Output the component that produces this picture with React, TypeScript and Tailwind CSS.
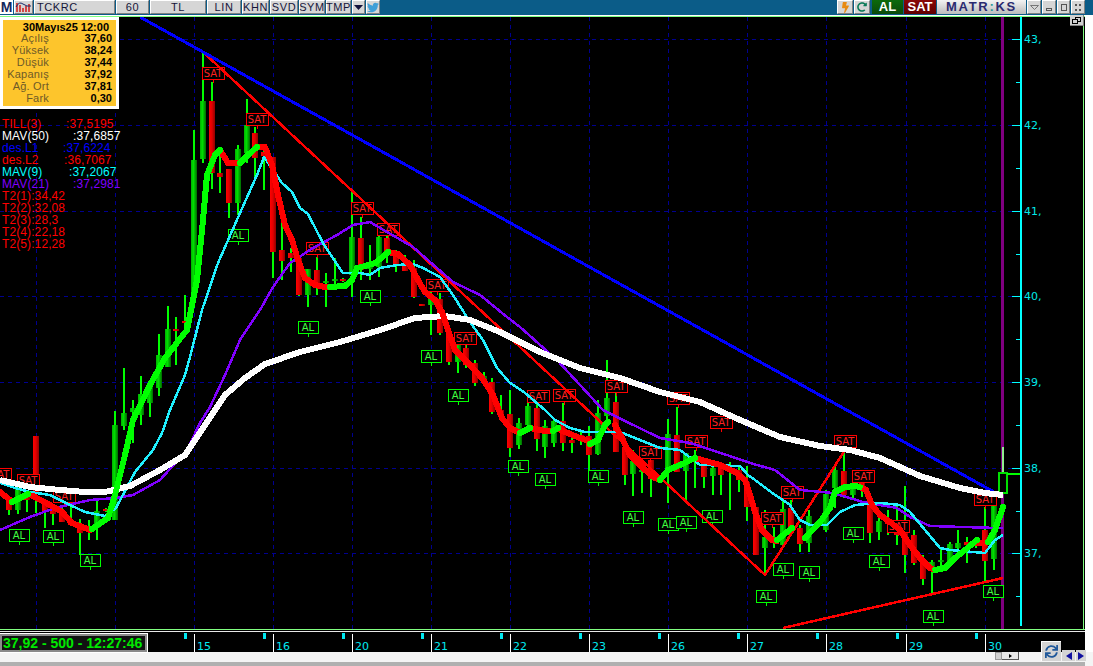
import { FaBolt, FaRedoAlt, FaSync, FaTwitter } from 'react-icons/fa';

type Bar = [number, number, number, number, number, 'g' | 'r'];

// x, wick top, wick bottom, body top, body bottom, colour (page pixels)
const bars: Bar[] = [
  [9, 496, 515, 500, 510, 'r'], [18, 480, 514, 485, 510, 'g'], [27, 490, 512, 494, 500, 'r'], [36, 436, 513, 436, 493, 'r'],
  [45, 505, 528, 502, 512, 'r'], [53, 505, 525, 510, 514, 'r'], [62, 505, 522, 510, 522, 'r'], [71, 505, 525, 522, 525, 'r'],
  [80, 519, 555, 526, 533, 'r'], [89, 520, 540, 528, 530, 'g'], [97, 500, 540, 511, 528, 'g'], [106, 508, 512, 509, 511, 'r'],
  [115, 411, 520, 425, 520, 'g'], [124, 368, 430, 413, 426, 'g'], [133, 400, 443, 408, 412, 'g'], [141, 376, 425, 394, 415, 'g'],
  [150, 387, 417, 387, 403, 'g'], [159, 334, 396, 355, 388, 'g'], [168, 306, 367, 329, 367, 'g'], [176, 317, 365, 329, 331, 'r'],
  [185, 295, 330, 321, 323, 'r'], [194, 130, 297, 160, 293, 'g'], [203, 52, 163, 101, 159, 'g'], [212, 82, 189, 101, 173, 'r'],
  [220, 148, 193, 173, 177, 'r'], [229, 169, 218, 169, 203, 'r'], [238, 145, 215, 149, 203, 'g'], [247, 99, 163, 125, 153, 'g'],
  [255, 127, 180, 133, 158, 'r'], [264, 150, 190, 152, 156, 'r'], [273, 157, 278, 157, 252, 'r'], [282, 223, 280, 250, 261, 'r'],
  [291, 248, 272, 253, 258, 'r'], [299, 258, 296, 258, 295, 'r'], [308, 269, 307, 269, 295, 'g'], [317, 257, 295, 270, 285, 'r'],
  [326, 273, 307, 281, 283, 'g'], [335, 258, 288, 279, 281, 'g'], [343, 278, 282, 279, 281, 'r'], [352, 190, 297, 237, 275, 'g'],
  [361, 217, 280, 238, 270, 'r'], [370, 245, 280, 267, 269, 'g'], [379, 235, 277, 237, 267, 'g'], [387, 228, 263, 238, 255, 'r'],
  [396, 250, 272, 255, 265, 'r'], [405, 255, 271, 265, 271, 'r'], [414, 260, 298, 268, 297, 'r'], [422, 304, 306, 304, 306, 'r'],
  [431, 282, 335, 295, 305, 'g'], [440, 293, 335, 299, 333, 'r'], [449, 330, 365, 333, 362, 'r'], [458, 343, 373, 345, 362, 'g'],
  [466, 340, 368, 348, 365, 'r'], [475, 360, 386, 363, 383, 'r'], [484, 372, 385, 376, 380, 'g'], [492, 378, 414, 382, 412, 'r'],
  [501, 395, 420, 410, 415, 'r'], [510, 390, 457, 414, 448, 'r'], [519, 418, 449, 423, 445, 'g'], [528, 393, 432, 406, 425, 'g'],
  [537, 400, 451, 408, 439, 'r'], [545, 420, 458, 426, 447, 'g'], [554, 418, 447, 421, 443, 'g'], [563, 403, 451, 421, 443, 'r'],
  [572, 432, 453, 440, 443, 'r'], [581, 432, 445, 435, 438, 'r'], [589, 426, 475, 436, 455, 'r'], [598, 400, 455, 413, 454, 'g'],
  [607, 360, 427, 398, 416, 'g'], [616, 392, 452, 402, 452, 'r'], [625, 445, 485, 447, 475, 'r'], [633, 450, 496, 461, 474, 'g'],
  [642, 457, 493, 470, 472, 'g'], [651, 460, 497, 460, 479, 'r'], [660, 478, 482, 479, 481, 'r'], [668, 419, 503, 434, 470, 'g'],
  [677, 407, 472, 435, 472, 'r'], [686, 453, 503, 453, 471, 'g'], [695, 450, 488, 456, 460, 'r'], [704, 458, 488, 458, 477, 'r'],
  [713, 460, 495, 468, 476, 'g'], [721, 462, 495, 468, 475, 'r'], [730, 462, 510, 468, 472, 'g'], [739, 465, 492, 470, 480, 'r'],
  [747, 466, 521, 482, 507, 'r'], [756, 507, 555, 507, 555, 'r'], [765, 510, 575, 537, 548, 'g'], [774, 527, 548, 538, 542, 'r'],
  [783, 500, 548, 509, 545, 'g'], [791, 500, 535, 508, 530, 'r'], [800, 525, 552, 528, 544, 'r'], [809, 510, 552, 516, 543, 'g'],
  [826, 490, 532, 494, 530, 'g'], [835, 465, 508, 470, 488, 'g'], [844, 450, 498, 471, 495, 'r'], [853, 480, 500, 485, 495, 'g'],
  [862, 480, 497, 483, 487, 'r'], [870, 495, 543, 499, 533, 'r'], [879, 510, 540, 521, 532, 'g'], [888, 510, 535, 520, 524, 'r'],
  [897, 505, 545, 520, 535, 'r'], [905, 486, 573, 527, 555, 'r'], [914, 530, 565, 535, 563, 'r'], [923, 555, 585, 560, 579, 'r'],
  [932, 560, 593, 562, 570, 'g'], [941, 547, 570, 560, 562, 'g'], [950, 542, 567, 544, 562, 'g'], [958, 530, 550, 543, 548, 'g'],
  [967, 537, 563, 542, 545, 'r'], [976, 540, 548, 542, 545, 'r'], [985, 507, 582, 530, 561, 'r'], [994, 498, 570, 500, 559, 'g'],
];

const white = '0,480 30,487 60,490 85,492 105,492 130,486 160,470 185,455 205,425 225,395 245,378 265,364 300,352 340,342 380,330 415,318 445,316 470,320 500,332 540,352 580,368 620,378 660,392 700,402 740,420 780,437 820,446 850,450 880,458 920,476 960,488 985,493 1003,495';
const cyan = '0,483 15,488 30,492 50,495 70,505 85,512 105,516 116,508 135,472 153,450 162,433 170,410 185,375 190,357 202,310 218,263 240,213 257,175 264,157 282,183 292,192 300,208 308,214 323,243 343,273 360,273 370,275 380,268 397,265 413,264 423,268 440,277 453,295 470,322 483,340 497,368 510,383 525,393 545,410 555,420 570,428 585,432 620,432 640,440 660,448 680,450 700,465 740,466 748,475 755,480 775,495 790,505 800,520 810,525 827,525 840,512 855,505 880,503 900,505 910,512 925,530 940,548 950,550 985,553 995,540 1003,535';
const purple = '0,530 30,517 55,508 90,500 115,498 133,495 160,480 187,450 200,423 210,407 225,375 240,340 260,310 273,287 290,263 313,248 337,235 353,225 370,222 387,232 413,247 437,268 453,282 480,295 507,317 520,327 557,360 580,385 603,410 623,420 660,438 690,443 727,455 750,463 775,470 800,490 833,493 863,502 897,508 910,517 930,526 997,528 1003,528';

const tillGreen = [
  '12,502 28,494',
  '92,529 108,518 115,495 125,455 133,420 150,385 165,358 183,335 187,330 194,295 197,280 203,220 207,175 215,155 220,150',
  '240,163 248,155 257,147',
  '330,287 345,286 352,280 357,268 365,266 375,263 385,255 388,252',
  '520,433 530,428', '553,431 558,428',
  '590,444 598,440 605,425 608,422',
  '660,480 668,470 680,465 695,458',
  '777,540 792,528',
  '805,538 820,522 830,508 835,492 845,487 855,486 860,487',
  '935,570 945,568 955,558 965,550 977,540',
  '988,542 995,530 1003,507',
];
const tillRed = [
  '0,492 10,500', '33,496 50,505 62,512 72,523 90,530',
  '220,150 228,163 240,163',
  '257,147 265,147 272,165 278,195 285,225 292,240 298,260 305,278 315,285 325,287 330,287',
  '388,252 398,254 410,265 418,280 425,292 435,300 442,312 448,330 455,350 470,365 482,378 493,395 502,418 510,428 520,433',
  '530,428 545,431 553,431', '558,429 575,436 588,441 590,445',
  '615,425 622,438 630,455 645,470 655,478 660,480',
  '695,458 720,465 735,472 745,480 750,495 755,512 762,530 772,540 777,541',
  '860,487 866,490 872,505 880,515 890,522 900,530 910,545 920,558 930,568 935,570',
  '975,543 985,543',
];

const alTags = [[19, 535], [53, 536], [90, 560], [238, 235], [308, 327], [370, 296], [431, 356], [458, 395], [518, 466], [545, 479], [598, 476], [633, 517], [668, 524], [686, 522], [712, 516], [766, 596], [783, 569], [809, 572], [853, 533], [879, 561], [933, 616], [993, 591]];
const satTags = [[0, 474], [28, 480], [64, 496], [213, 73], [257, 119], [317, 248], [362, 208], [388, 229], [437, 285], [465, 338], [538, 396], [564, 395], [616, 386], [650, 452], [678, 398], [696, 441], [721, 422], [772, 518], [792, 492], [845, 441], [863, 476], [898, 526], [985, 499]];

const days = [[194, '15'], [273, '16'], [352, '20'], [431, '21'], [510, '22'], [589, '23'], [668, '26'], [747, '27'], [826, '28'], [906, '29'], [985, '30']] as const;
const gridX = [36, 115, 194, 273, 352, 431, 510, 589, 668, 747, 826, 906, 985];
const prices = [[39, '43,'], [125, '42,'], [211, '41,'], [296, '40,'], [382, '39,'], [468, '38,'], [553, '37,']] as const;

const info = [['Açılış', '37,60'], ['Yüksek', '38,24'], ['Düşük', '37,44'], ['Kapanış', '37,92'], ['Ağ. Ort', '37,81'], ['Fark', '0,30']];

function Btn({ w, children, className = '' }: { w: string; children?: React.ReactNode; className?: string }) {
  return (
    <div className={`${w} h-[14px] flex items-center justify-center bg-[#d6d6d6] border-t border-l border-t-white border-l-white border-b border-r border-b-[#808080] border-r-[#808080] text-[11px] text-[#15153a] tracking-[0.6px] ${className}`}>
      {children}
    </div>
  );
}

function Toolbar() {
  return (
    <div className="h-[15px] shrink-0 flex justify-between bg-[#0b5c88] font-['Liberation_Sans',sans-serif]">
      <div className="flex gap-px">
        <div className="w-[13px] h-[14px] bg-white flex items-center justify-center text-[14px] leading-none font-bold text-[#14285c]">M</div>
        <Btn w="w-[19px]">
          <svg width="17" height="12" viewBox="0 0 17 12">
            <path d="M2 2v9M5 4v7M8 7v4M11 5v6M14 3v8" stroke="#d01818" strokeWidth="1.5" />
            <path d="M1 6 Q4 0 8 3 T16 5" stroke="#1a2a6a" fill="none" />
          </svg>
        </Btn>
        <Btn w="w-[81px] !justify-start pl-[2px]">TCKRC</Btn>
        <Btn w="w-[33px]">60</Btn>
        <Btn w="w-[56px]">TL</Btn>
        <Btn w="w-[34px]">LIN</Btn>
        <Btn w="w-[27px]">KHN</Btn>
        <Btn w="w-[28px]">SVD</Btn>
        <Btn w="w-[26px]">SYM</Btn>
        <Btn w="w-[25px]">TMP</Btn>
        <Btn w="w-[13px]">
          <svg width="9" height="5" viewBox="0 0 9 5"><path d="M0 0h9L4.5 5z" fill="#14143c" /></svg>
        </Btn>
        <Btn w="w-[14px]"><FaTwitter className="text-[13px] text-[#3f9fd8]" /></Btn>
      </div>
      <div className="flex gap-px pr-[8px]">
        <Btn w="w-[16px]"><FaBolt className="text-[11px] text-[#e88a10]" /></Btn>
        <Btn w="w-[16px] mr-px"><FaRedoAlt className="text-[10px] text-[#0a7a58]" /></Btn>
        <div className="w-[31px] h-[14px] flex items-center justify-center bg-gradient-to-b from-[#0c6a0c] to-[#0a4a0a] text-[13px] font-bold text-white">AL</div>
        <div className="w-[32px] h-[14px] flex items-center justify-center bg-gradient-to-b from-[#8a0808] to-[#600000] text-[13px] font-bold text-white">SAT</div>
        <div className="w-[89px] h-[14px] flex items-center justify-center bg-gradient-to-b from-[#f4f4f4] to-[#bcbcbc] text-[13px] font-bold tracking-[1.7px] text-[#2a2a70]">
          MATR<span className="text-[#2a9a9a]">:</span>KS
        </div>
        <Btn w="w-[14px]"><svg width="9" height="5" viewBox="0 0 9 5"><path d="M0.5 0.5h8L4.5 4.5z" fill="none" stroke="#777" /></svg></Btn>
        <Btn w="w-[14px]"><div className="w-[6px] h-[3px] border border-[#555] mt-[4px]" /></Btn>
        <Btn w="w-[13px]"><div className="w-[6px] h-[7px] border border-[#555]" /></Btn>
        <Btn w="w-[14px]"><div className="w-[6px] h-[7px] border-2 border-dotted border-[#555]" /></Btn>
      </div>
    </div>
  );
}

function Chart() {
  return (
    <svg width="1083" height="612" viewBox="0 17 1083 612" className="block font-['DejaVu_Sans',sans-serif]" shapeRendering="crispEdges">
      <defs>
        <linearGradient id="gb"><stop offset="0" stopColor="#00b000" /><stop offset="0.4" stopColor="#00e000" /><stop offset="1" stopColor="#006a00" /></linearGradient>
        <linearGradient id="rb"><stop offset="0" stopColor="#ff0000" /><stop offset="0.5" stopColor="#e00000" /><stop offset="1" stopColor="#900000" /></linearGradient>
      </defs>
      {gridX.map((x) => <line key={x} x1={x} x2={x} y1={17} y2={629} stroke="#000090" strokeDasharray="4 4" />)}
      {prices.map(([y]) => <line key={y} x1={0} x2={1012} y1={y} y2={y} stroke="#000090" strokeDasharray="4 4" />)}
      <rect x={1001} y={17} width={3} height={612} fill="#800080" />
      <rect x={1020} y={17} width={2} height={609} fill="#00ffff" />
      {prices.map(([y, t]) => (
        <g key={y}>
          <rect x={1012} y={y} width={8} height={1} fill="#00ffff" />
          <rect x={1016} y={y + 43} width={4} height={1} fill="#00ffff" />
          <text x={1024} y={y + 4} fontSize="11" fill="#00e8e8">{t}</text>
        </g>
      ))}
      <rect x={1016} y={82} width={4} height={1} fill="#00ffff" />
      {bars.map(([x, hi, lo, top, bot, c]) => (
        <g key={x}>
          <rect x={x - 1} y={hi} width={2} height={lo - hi} fill="#00ff00" />
          <rect x={x - 3} y={top} width={6} height={Math.max(bot - top, 2)} fill={c === 'g' ? 'url(#gb)' : 'url(#rb)'} />
        </g>
      ))}
      <rect x={1002} y={447} width={2} height={26} fill="#90ee90" />
      <rect x={999} y={473} width={8} height={20} fill="#000" stroke="#00e000" strokeWidth="2" />
      <rect x={1007} y={473} width={13} height={2} fill="#00ff00" />
      {satTags.map(([x, y]) => (
        <g key={`${x}-${y}`}>
          <rect x={x - 11} y={y - 6} width={22} height={12} fill="#000" stroke="#ff0000" />
          <line x1={x} x2={x} y1={y + 6} y2={y + 10} stroke="#ff0000" />
          <text x={x} y={y + 4} fontSize="10" fill="#ff2020" textAnchor="middle">SAT</text>
        </g>
      ))}
      {alTags.map(([x, y]) => (
        <g key={`${x}-${y}`}>
          <rect x={x - 10} y={y - 6} width={20} height={12} fill="#000" stroke="#00ff00" />
          <line x1={x} x2={x} y1={y + 6} y2={y + 10} stroke="#00ff00" />
          <text x={x} y={y + 4} fontSize="10" fill="#40ff40" textAnchor="middle">AL</text>
        </g>
      ))}
      <g fill="none" strokeLinejoin="round">
        <polyline points="203,52 765,575 845,450" stroke="#ff0000" strokeWidth="2.5" />
        <polyline points="783,628 1003,578" stroke="#ff0000" strokeWidth="2.5" />
        <polyline points="140,17 1003,497" stroke="#0000ff" strokeWidth="3" />
        <polyline points={purple} stroke="#8000ff" strokeWidth="2.5" />
        <polyline points={cyan} stroke="#20f0ff" strokeWidth="2.5" />
        <polyline points={white} stroke="#ffffff" strokeWidth="6" />
        {tillRed.map((p) => <polyline key={p} points={p} stroke="#ff0000" strokeWidth="6" strokeLinecap="round" />)}
        {tillGreen.map((p) => <polyline key={p} points={p} stroke="#00ff00" strokeWidth="6" strokeLinecap="round" />)}
      </g>
    </svg>
  );
}

function InfoPanel() {
  return (
    <div className="absolute left-0 top-0 w-[119px] h-[92px] bg-white p-[3px] font-['Liberation_Sans',sans-serif]">
      <div className="h-full bg-[#fdc52c] pt-[1px] text-[11px] leading-[12px]">
        <div className="text-right pr-[7px] font-bold text-black">30Mayıs25 12:00</div>
        <div className="mt-[-1px]">
          {info.map(([k, v]) => (
            <div key={k} className="flex">
              <span className="w-[46px] text-right text-[#6e5a28] tracking-[0.2px]">{k}</span>
              <span className="flex-1 text-right pr-[4px] font-bold text-black">{v}</span>
            </div>
          ))}
        </div>
      </div>
    </div>
  );
}

function Legend() {
  return (
    <div className="absolute left-[2px] top-[101px] text-[12px] leading-[12px] tracking-[0.1px] font-['Liberation_Sans',sans-serif]">
      <div className="flex text-[#ff0000]"><span className="w-[64px]">TILL(3)</span>:37,5195</div>
      <div className="flex text-white"><span className="w-[71px]">MAV(50)</span>:37,6857</div>
      <div className="flex text-[#0000ff]"><span className="w-[61px]">des.L1</span>:37,6224</div>
      <div className="flex text-[#ff0000]"><span className="w-[62px]">des.L2</span>:36,7067</div>
      <div className="flex text-[#00ffff]"><span className="w-[67px]">MAV(9)</span>:37,2067</div>
      <div className="flex text-[#8000ff]"><span className="w-[71px]">MAV(21)</span>:37,2981</div>
      <div className="text-[#ff0000]">T2(1):34,42</div>
      <div className="text-[#ff0000]">T2(2):32,08</div>
      <div className="text-[#ff0000]">T2(3):28,3</div>
      <div className="text-[#ff0000]">T2(4):22,18</div>
      <div className="text-[#ff0000]">T2(5):12,28</div>
    </div>
  );
}

function DateAxis() {
  return (
    <svg width="1085" height="20" viewBox="0 632 1085 20" className="block font-['DejaVu_Sans',sans-serif]" shapeRendering="crispEdges">
      <rect x={0} y={632} width={1085} height={20} fill="#000" />
      {[27, 106].map((x) => <rect key={x} x={x} y={633} width={3} height={2} fill="#00e8f0" />)}
      {days.map(([x, t]) => (
        <g key={t}>
          <rect x={x} y={634} width={1} height={18} fill="#fff" />
          <rect x={x - 10} y={633} width={3} height={6} fill="#00e8f0" />
          <text x={x + 3} y={650} fontSize="11" fill="#00e8f0">{t}</text>
        </g>
      ))}
    </svg>
  );
}

export default function App() {
  return (
    <div className="relative w-[1093px] h-[666px] overflow-hidden flex flex-col bg-white">
      <Toolbar />
      <div className="h-[1px] shrink-0 bg-white" />
      <div className="relative h-[613px] w-[1085px] shrink-0 border-t border-[#80ff80] bg-black">
        <div className="relative w-[1084px] h-[612px] border-r border-[#80ff80]">
          <Chart />
          <InfoPanel />
          <Legend />
          <div className="absolute right-[-1px] top-[-2px] w-[14px] h-[11px] flex items-center justify-center bg-[#d0d0d0] border-b border-r border-[#808080]">
            <div className="relative w-[9px] h-[7px]">
              <div className="absolute right-0 top-0 w-[6px] h-[5px] border border-black" />
              <div className="absolute left-0 bottom-0 w-[6px] h-[5px] border border-black bg-[#d0d0d0]" />
            </div>
          </div>
        </div>
      </div>
      <div className="h-[1px] w-[1085px] shrink-0 bg-[#80ff80]" />
      <div className="h-[1px] w-[1085px] shrink-0 bg-black" />
      <div className="h-[1px] w-[1085px] shrink-0 bg-[#e8e8e8]" />
      <DateAxis />
      <div className="flex-1 flex flex-col justify-end bg-[#f4f4f4]">
        <div className="h-[4px] w-[1085px] bg-[#b0b0b0]" />
      </div>
      <div className="absolute left-0 top-[634px] w-[147px] h-[18px] bg-[#111] border-2 border-[#8a8a8a] outline outline-1 outline-white flex items-center pl-[1px] text-[14px] font-bold text-[#00e800] whitespace-nowrap font-['Liberation_Sans',sans-serif]">
        37,92 - 500 - 12:27:46
      </div>
      <div className="absolute left-[995px] top-[652px] flex">
        <div className="w-[7px] h-[8px] bg-[#d0d0d0] border border-[#999]" />
        <div className="w-[17px] h-[8px] flex items-center justify-center bg-[#e8e8e8] border-b border-r border-[#555]">
          <div className="w-0 h-0 border-y-[2px] border-y-transparent border-l-[3px] border-l-black" />
        </div>
      </div>
      <div className="absolute left-[1041px] top-[641px] flex items-end gap-px">
        <div className="w-[20px] h-[20px] flex items-center justify-center bg-[#d4d4d4] border-t border-l border-white">
          <FaSync className="text-[13px] text-[#20589a]" />
        </div>
        <div className="w-[13px] h-[11px] flex items-center justify-center bg-[#d4d4d4]">
          <div className="w-0 h-0 border-y-[4px] border-y-transparent border-r-[6px] border-r-[#1010a0]" />
        </div>
        <div className="w-[10px] h-[11px] flex items-center justify-center bg-[#d4d4d4]">
          <div className="w-0 h-0 border-y-[4px] border-y-transparent border-l-[6px] border-l-[#1010a0]" />
        </div>
      </div>
    </div>
  );
}
